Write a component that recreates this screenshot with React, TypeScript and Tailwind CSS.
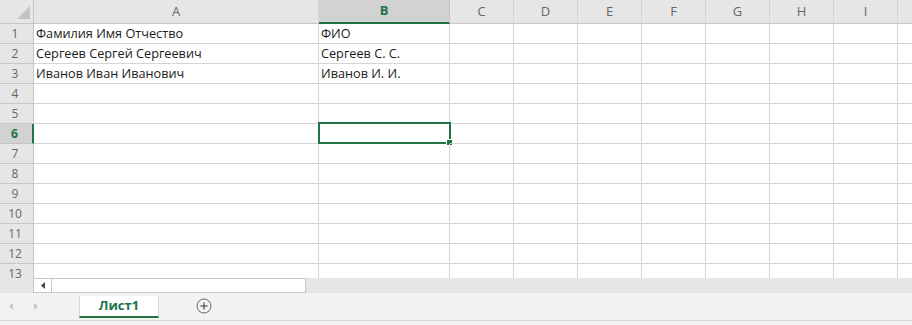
import React from "react";

const cols = [
  { name: "A", w: 285 },
  { name: "B", w: 131 },
  { name: "C", w: 64 },
  { name: "D", w: 64 },
  { name: "E", w: 64 },
  { name: "F", w: 64 },
  { name: "G", w: 64 },
  { name: "H", w: 64 },
  { name: "I", w: 64 },
  { name: "J", w: 64 },
];

const data: Record<number, string[]> = {
  1: ["Фамилия Имя Отчество", "ФИО"],
  2: ["Сергеев Сергей Сергеевич", "Сергеев С. С."],
  3: ["Иванов Иван Иванович", "Иванов И. И."],
};

const font = { fontFamily: '"Segoe UI", "Open Sans", "Noto Sans", sans-serif' };

export default function App() {
  const rows = Array.from({ length: 13 }, (_, i) => i + 1);
  return (
    <div className="w-[912px] h-[325px] overflow-hidden bg-white flex flex-col" style={font}>
      {/* Grid */}
      <div className="h-[278px] overflow-hidden flex flex-col shrink-0">
        {/* Header row */}
        <div className="flex h-[24px] shrink-0 bg-[#e6e6e6] border-b border-[#c6c6c6]">
          <div className="w-[34px] shrink-0 border-r border-[#c6c6c6] relative">
            <svg className="absolute left-[17px] top-[6px]" width="14" height="14" viewBox="0 0 14 14">
              <polygon points="13,0 13,13 0,13" fill="#c3c3c3" />
            </svg>
          </div>
          {cols.map((c) =>
            c.name === "B" ? (
              <div
                key={c.name}
                style={{ width: c.w }}
                className="shrink-0 bg-[#d2d2d2] border-r border-[#c6c6c6] border-b-2 border-b-[#217346] flex items-center justify-center text-[13px] font-bold text-[#217346] -mb-px"
              >
                {c.name}
              </div>
            ) : (
              <div
                key={c.name}
                style={{ width: c.w }}
                className="shrink-0 border-r border-[#d4d4d4] flex items-center justify-center text-[13px] text-[#666666]"
              >
                {c.name}
              </div>
            )
          )}
        </div>
        {rows.map((r) => {
          const sel = r === 6;
          return (
            <div key={r} className="flex h-[20px] shrink-0">
              <div
                className={
                  sel
                    ? "w-[34px] shrink-0 bg-[#d2d2d2] border-b border-[#c6c6c6] border-r-2 border-r-[#217346] flex items-center justify-center pr-[3px] text-[12px] font-bold text-[#217346]"
                    : "w-[34px] shrink-0 bg-[#e6e6e6] border-b border-[#c6c6c6] border-r border-r-[#c6c6c6] flex items-center justify-center pr-[3px] text-[12px] text-[#666666]"
                }
              >
                {r}
              </div>
              {cols.map((c, ci) => (
                <div
                  key={c.name}
                  style={{ width: c.w }}
                  className="shrink-0 border-r border-b border-[#d4d4d4] relative flex items-center pl-[2px] text-[12.7px] text-[#1a1a1a] whitespace-nowrap"
                >
                  {data[r]?.[ci] ?? ""}
                  {sel && c.name === "B" && (
                    <div className="absolute left-[-1px] top-[-2px] w-[133px] h-[22px] border-2 border-[#217346]">
                      <div className="absolute right-[-4px] bottom-[-4px] w-[5px] h-[5px] bg-[#217346] border border-white box-content" />
                    </div>
                  )}
                </div>
              ))}
            </div>
          );
        })}
      </div>
      {/* Horizontal scrollbar */}
      <div className="flex h-[15px] shrink-0 bg-[#e6e6e6]">
        <div className="w-[33px] shrink-0" />
        <div className="w-[273px] shrink-0 h-[15px] border border-[#c6c6c6] bg-white flex">
          <div className="w-[18px] h-full border-r border-[#c6c6c6] flex items-center justify-center">
            <svg width="4" height="7" viewBox="0 0 4 7">
              <polygon points="4,0 4,7 0,3.5" fill="#444444" />
            </svg>
          </div>
        </div>
      </div>
      {/* Sheet tabs */}
      <div className="flex items-start h-[28px] shrink-0 bg-[#f3f2f1] border-b border-[#d4d4d4]">
        <div className="w-[79px] h-[26px] shrink-0 flex items-center">
          <svg className="ml-[9px]" width="4" height="7" viewBox="0 0 4 7">
            <polygon points="4,0 4,7 0,3.5" fill="#c8c8c8" />
          </svg>
          <svg className="ml-[21px]" width="4" height="7" viewBox="0 0 4 7">
            <polygon points="0,0 0,7 4,3.5" fill="#c8c8c8" />
          </svg>
        </div>
        <div className="mt-[3px] w-[80px] h-[22px] shrink-0 bg-white border-x border-[#d4d4d4] border-b-2 border-b-[#217346] flex items-center justify-center text-[13px] font-bold text-[#217346]">
          Лист1
        </div>
        <div className="ml-[37px] h-[26px] flex items-center">
          <svg width="16" height="16" viewBox="0 0 16 16">
            <circle cx="8" cy="8" r="7" fill="none" stroke="#666666" strokeWidth="1" />
            <line x1="8" y1="4.5" x2="8" y2="11.5" stroke="#555555" strokeWidth="1.3" />
            <line x1="4.5" y1="8" x2="11.5" y2="8" stroke="#555555" strokeWidth="1.3" />
          </svg>
        </div>
      </div>
      <div className="flex-1 bg-[#f3f2f1]" />
    </div>
  );
}
